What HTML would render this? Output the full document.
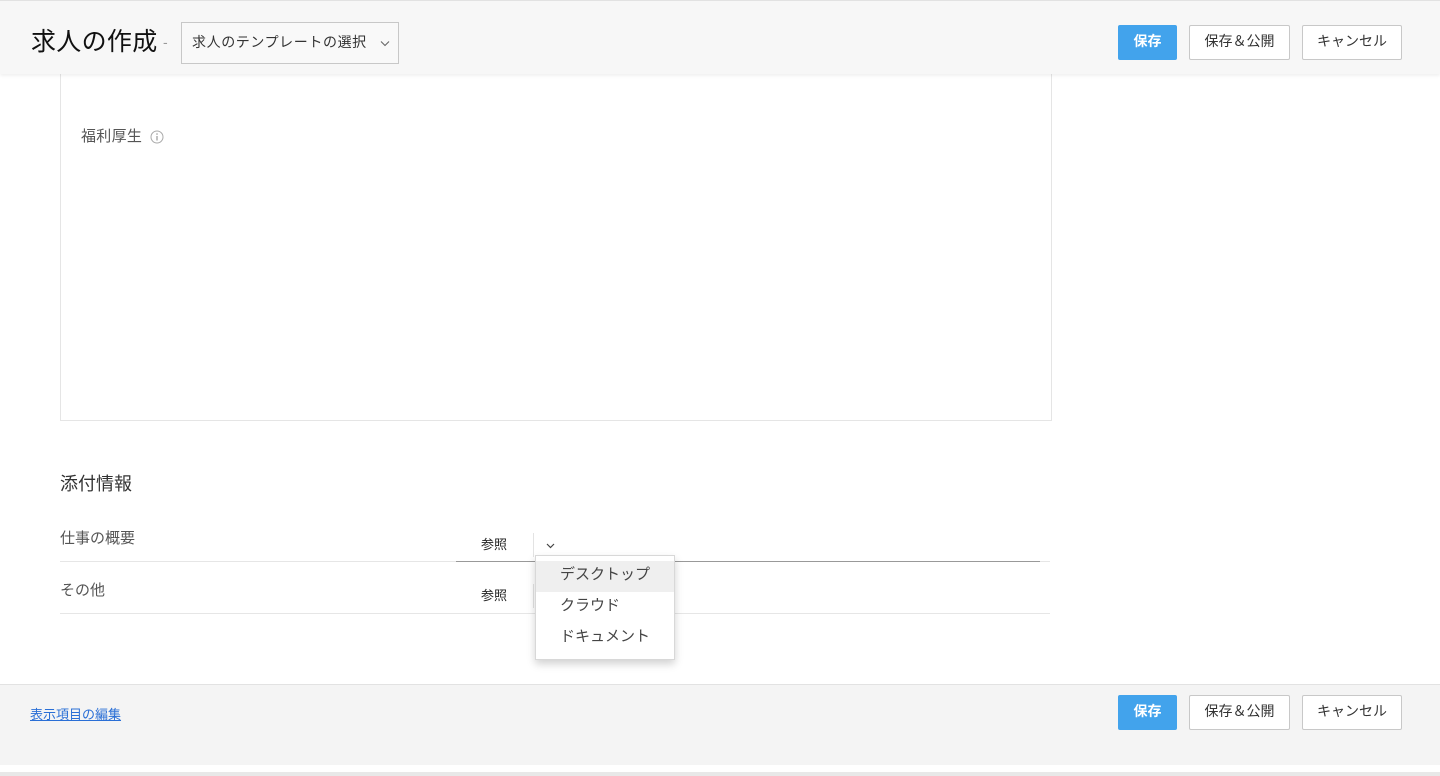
<!DOCTYPE html>
<html><head><meta charset="utf-8"><style>
*{margin:0;padding:0;box-sizing:border-box}
body{width:1440px;height:776px;position:relative;background:#fff;font-family:"Liberation Sans","Noto Sans CJK JP",sans-serif;overflow:hidden;color:#333}
.a{position:absolute}
.hdr{left:0;top:0;width:1440px;height:74px;background:#f7f7f7;border-top:1px solid #e2e2e2;box-shadow:0 2px 3px rgba(0,0,0,.06);z-index:2}
.btn{position:absolute;height:35px;border:1px solid #c8c8c8;background:#fff;border-radius:2px;font-size:14px;color:#333;display:flex;align-items:center;justify-content:center;padding-bottom:3px}
.pri{background:#42a3ec;border-color:#42a3ec;color:#fff;font-weight:bold}
</style></head><body>
<div class="a hdr">
  <div class="a" style="left:31px;top:21px;font-size:25px;color:#111;letter-spacing:.3px">求人の作成</div>
  <div class="a" style="left:163px;top:33px;font-size:14px;color:#999">-</div>
  <div class="a" style="left:181px;top:21px;width:218px;height:42px;border:1px solid #c8c8c8;background:#f9f9f9;font-size:14px;color:#333;padding:9px 0 0 10px;letter-spacing:.6px">求人のテンプレートの選択
    <svg class="a" style="left:198px;top:17px" width="10" height="7" viewBox="0 0 10 7"><path d="M1 1.5L5 5.5L9 1.5" fill="none" stroke="#666" stroke-width="1.1"/></svg></div>
  <div class="btn pri" style="left:1118px;top:24px;width:59px">保存</div>
  <div class="btn" style="left:1189px;top:24px;width:101px">保存＆公開</div>
  <div class="btn" style="left:1302px;top:24px;width:100px">キャンセル</div>
</div>
<div class="a" style="left:60px;top:60px;width:992px;height:361px;border:1px solid #e5e5e5"></div>
<div class="a" style="left:81px;top:125px;font-size:15px;color:#555;letter-spacing:.3px">福利厚生</div>
<svg class="a" style="left:150px;top:130px" width="14" height="14" viewBox="0 0 14 14"><circle cx="7" cy="7" r="6" fill="none" stroke="#aaa"/><rect x="6.4" y="6" width="1.2" height="4.5" fill="#999"/><circle cx="7" cy="4" r=".8" fill="#999"/></svg>
<div class="a" style="left:60px;top:470px;font-size:18px;color:#333">添付情報</div>
<div class="a" style="left:60px;top:527px;font-size:15px;color:#555">仕事の概要</div>
<div class="a" style="left:60px;top:561px;width:396px;height:1px;background:#e6e6e6"></div>
<div class="a" style="left:456px;top:561px;width:584px;height:1px;background:#999"></div>
<div class="a" style="left:1040px;top:561px;width:10px;height:1px;background:#e6e6e6"></div>
<div class="a" style="left:481px;top:534px;font-size:13px;color:#222">参照</div>
<div class="a" style="left:533px;top:533px;width:1px;height:24px;background:#e3e3e3"></div>
<svg class="a" style="left:546px;top:543px" width="9" height="6" viewBox="0 0 9 6"><path d="M1 1L4.5 4.5L8 1" fill="none" stroke="#444" stroke-width="1.2"/></svg>
<div class="a" style="left:60px;top:579px;font-size:15px;color:#555">その他</div>
<div class="a" style="left:481px;top:585px;font-size:13px;color:#222">参照</div>
<div class="a" style="left:533px;top:584px;width:1px;height:24px;background:#e3e3e3"></div>
<div class="a" style="left:60px;top:613px;width:990px;height:1px;background:#e6e6e6"></div>
<div class="a" style="left:535px;top:555px;width:140px;height:105px;background:#fff;border:1px solid #d8d8d8;box-shadow:0 4px 8px rgba(0,0,0,.18);font-size:15px;color:#444;z-index:3">
  <div style="margin-top:5px;height:31px;background:#efefef;padding:2px 0 0 24px">デスクトップ</div>
  <div style="height:31px;padding:2px 0 0 24px">クラウド</div>
  <div style="height:31px;padding:2px 0 0 24px">ドキュメント</div>
</div>
<div class="a" style="left:0;top:684px;width:1440px;height:81px;background:#f4f4f4;border-top:1px solid #e2e2e2"></div>
<div class="a" style="left:30px;top:704px;font-size:13px;color:#2a6fd6;text-decoration:underline">表示項目の編集</div>
<div class="btn pri" style="left:1118px;top:695px;width:59px">保存</div>
<div class="btn" style="left:1189px;top:695px;width:101px">保存＆公開</div>
<div class="btn" style="left:1302px;top:695px;width:100px">キャンセル</div>
<div class="a" style="left:0;top:772px;width:1440px;height:4px;background:#e8e8e8"></div>
</body></html>
